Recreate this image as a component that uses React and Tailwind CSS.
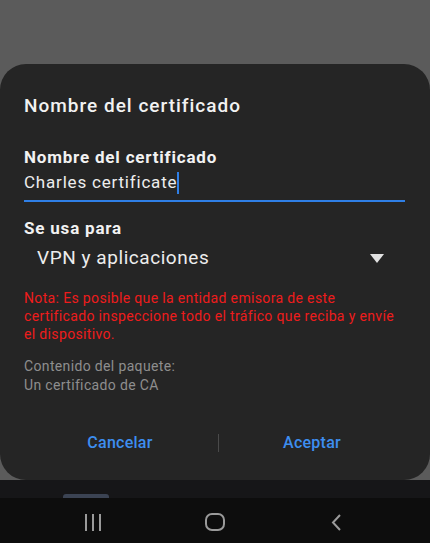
export default function App() {
  return (
    <div className="w-[430px] h-[543px] flex flex-col bg-[#5b5b5b] overflow-hidden" style={{ fontFamily: 'Roboto, "Noto Sans", sans-serif' }}>
      <div className="h-[64px] shrink-0" />
      {/* Dialog */}
      <div className="h-[416px] shrink-0 bg-[#252525] rounded-[26px] flex flex-col px-[24px]">
        <div className="pt-[30px] text-[19px] leading-[24px] font-medium tracking-[1px] text-[#f2f2f2]">Nombre del certificado</div>

        <div className="mt-[28px] text-[17px] leading-[22px] font-bold tracking-[0.8px] text-[#f2f2f2]">Nombre del certificado</div>
        <div className="mt-[3px] flex items-center h-[24px] text-[17px] tracking-[0.8px] text-[#ededed]">
          <span>Charles certificate</span>
          <span className="w-[2px] h-[22px] bg-[#2f7fe6]" />
        </div>
        <div className="mt-[5px] mr-[1px] h-[2px] bg-[#2f7fe6]" />

        <div className="mt-[15px] text-[17px] leading-[22px] font-bold tracking-[0.8px] text-[#f2f2f2]">Se usa para</div>
        <div className="mt-[4px] flex items-center justify-between pl-[13px] pr-[22px] h-[30px]">
          <span className="text-[19px] tracking-[0.55px] text-[#ededed]">VPN y aplicaciones</span>
          <svg width="14" height="9" viewBox="0 0 14 9">
            <path d="M0 0 H14 L7 9 Z" fill="#e2e2e2" />
          </svg>
        </div>

        <div className="mt-[16px] pr-[6px] text-[14px] leading-[18px] tracking-[0.35px] text-[#ee1c1c]">
          Nota: Es posible que la entidad emisora de este certificado inspeccione todo el tráfico que reciba y envíe el dispositivo.
        </div>

        <div className="mt-[14px] text-[14px] leading-[19px] tracking-[0.35px] text-[#8e8e8e]">
          <div>Contenido del paquete:</div>
          <div>Un certificado de CA</div>
        </div>

        <div className="mt-[38px] flex items-center -mx-[24px] pl-[60px]">
          <button className="w-[120px] text-[16px] leading-[20px] font-medium tracking-[0.25px] text-[#3d8ef0]">Cancelar</button>
          <span className="ml-[38px] w-[1px] h-[18px] bg-[#4a4a4a]" />
          <button className="ml-[33px] w-[120px] text-[16px] leading-[20px] font-medium tracking-[0.25px] text-[#3d8ef0]">Aceptar</button>
        </div>
      </div>

      {/* area below dialog */}
      <div className="h-[18px] shrink-0 bg-[#161618] flex items-end pl-[63px]">
        <div className="w-[46px] h-[4px] rounded-t-[3px] bg-[#3b4353]" />
      </div>

      {/* Nav bar */}
      <div className="flex-1 bg-[#0d0d0d] flex items-center pl-[73px] pt-[3px]">
        <div className="w-[40px] flex justify-center">
          <svg width="18" height="17" viewBox="0 0 18 17">
            <path d="M2 0 V17 M9 0 V17 M16 0 V17" stroke="#9a9a9a" strokeWidth="2" />
          </svg>
        </div>
        <div className="ml-[82px] w-[40px] flex justify-center">
          <svg width="20" height="18" viewBox="0 0 20 18">
            <rect x="1" y="1" width="18" height="16" rx="6" fill="none" stroke="#9a9a9a" strokeWidth="2" />
          </svg>
        </div>
        <div className="ml-[81px] w-[40px] flex justify-center">
          <svg width="12" height="17" viewBox="0 0 12 17">
            <path d="M10 1 L3 8.5 L10 16" fill="none" stroke="#9a9a9a" strokeWidth="2" />
          </svg>
        </div>
      </div>
    </div>
  );
}
